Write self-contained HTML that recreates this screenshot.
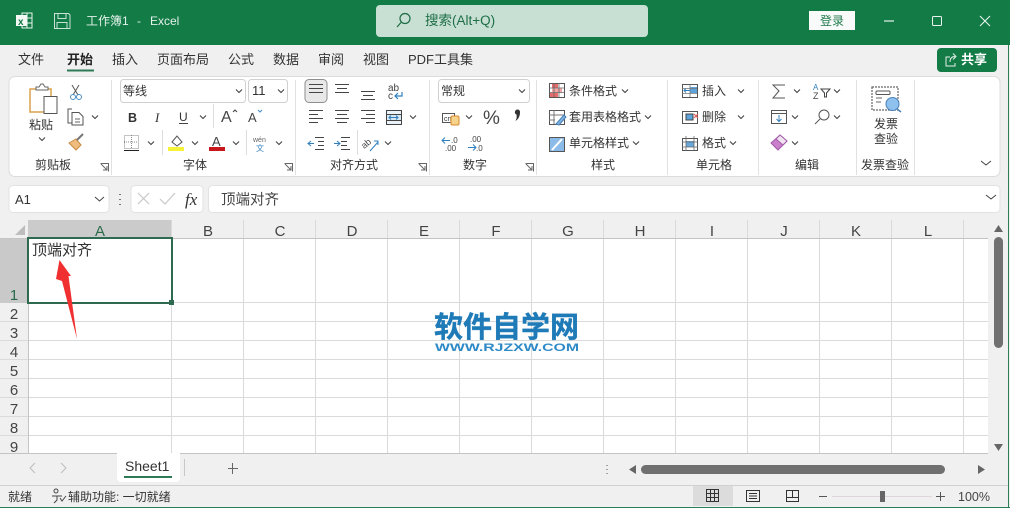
<!DOCTYPE html>
<html><head><meta charset="utf-8"><style>
html,body{margin:0;padding:0;background:#f0f0f0;width:1010px;height:508px;overflow:hidden}
svg{display:block}
text{font-family:"Liberation Sans","Noto Sans CJK SC",sans-serif;fill:#333;font-size:12px}
.t{font-size:13px;fill:#333}
.h{font-size:15px;fill:#444;text-anchor:middle}
.r{font-size:15px;fill:#444;text-anchor:middle}
.i{fill:none;stroke:#444;stroke-width:1}
.g{fill:none;stroke:#dadada;stroke-width:1}
.ch{fill:none;stroke:#444;stroke-width:1.100}
</style></head><body>
<svg width="1010" height="508" viewBox="0 0 1010 508" xmlns="http://www.w3.org/2000/svg">
<defs><polyline id="c" class="ch" points="-3,-1.500 0,1.500 3,-1.500"/></defs>
<rect width="1010" height="508" fill="#f0f0f0"/>
<!-- title bar -->
<rect width="1010" height="45" fill="#127b46"/>
<rect x="22" y="13" width="10" height="15" fill="none" stroke="#e8f3ed"/><path d="M22 18h10M22 23h10M27 13v15" stroke="#e8f3ed" fill="none"/>
<rect x="16" y="15" width="11" height="11" fill="#f4f9f6"/><text x="18" y="25" style="font-size:10px;font-weight:bold;fill:#127b46">x</text>
<path d="M54.500 13.500h14l1.500 1.500v13.500h-15.500zM58 13.500v5h8v-5M57 28.500v-6h10v6" fill="none" stroke="#c8e2d5"/>
<text x="86" y="25" style="fill:#e4f1ea;font-size:12px">工作簿1</text><text x="137" y="25" style="fill:#e4f1ea">-</text><text x="150" y="25" style="fill:#e4f1ea;font-size:12px">Excel</text>
<rect x="376" y="5" width="272" height="32" rx="4" fill="#c7e0d3"/>
<circle cx="405" cy="18.500" r="5" fill="none" stroke="#1d6b44" stroke-width="1.200"/><path d="M401 22.500l-4 4.500" stroke="#1d6b44" stroke-width="1.200"/>
<text x="425" y="25" style="font-size:13.500px;fill:#1f6e47">搜索(Alt+Q)</text>
<rect x="809" y="11" width="46" height="19" fill="#f8fbf9"/><text x="820" y="25" style="fill:#1f7a4c;font-size:12px">登录</text>
<path d="M884 21h10" stroke="#e8f3ed" stroke-width="1.200"/><rect x="932.500" y="16.500" width="9" height="9" rx="1" fill="none" stroke="#e8f3ed"/><path d="M980 16l10 10M990 16l-10 10" stroke="#e8f3ed" stroke-width="1.100"/>
<!-- menu tabs -->
<text class="t" x="18" y="64">文件</text><text class="t" x="67" y="64" style="font-weight:bold;fill:#222">开始</text>
<rect x="67" y="69.500" width="27" height="2" fill="#2e7a56"/>
<text class="t" x="112" y="64">插入</text><text class="t" x="157" y="64">页面布局</text><text class="t" x="228" y="64">公式</text><text class="t" x="273" y="64">数据</text><text class="t" x="318" y="64">审阅</text><text class="t" x="363" y="64">视图</text><text class="t" x="408" y="64">PDF工具集</text>
<rect x="937" y="48" width="60" height="24" rx="4" fill="#127b46"/>
<path d="M950 57h-4v9h9v-3M950 62c0-4 2-5.500 5-5.500M953 53.500l3 3-3 3" fill="none" stroke="#e4f1ea"/>
<text x="961" y="64" style="fill:#fff;font-size:13px;font-weight:bold">共享</text>
<!-- ribbon -->
<rect x="9" y="76.500" width="991" height="100" rx="6" fill="#fff" stroke="#dcdcdc"/>
<path d="M111.500 80v95M295.500 80v95M429.500 80v95M536.500 80v95M667.500 80v95M758.500 80v95M856.500 80v95M914.500 80v95" stroke="#e1e1e1"/>
<!-- clipboard -->
<path d="M37 89h-7v23h14" fill="none" stroke="#d9a24d" stroke-width="1.500"/><path d="M45 89h6v7" fill="none" stroke="#d9a24d" stroke-width="1.500"/>
<path d="M36 90v-3h3l2-3h2l2 3h3v3z" fill="#fff" stroke="#666"/>
<rect x="44" y="96.500" width="13" height="17" fill="#fff" stroke="#555"/>
<text x="29" y="129">粘贴</text><use href="#c" x="42" y="139"/>
<path d="M72 85l6 10M79 85l-6 10" stroke="#555" fill="none"/><circle cx="73" cy="97" r="2.500" fill="none" stroke="#4a8dc2"/><circle cx="79" cy="97" r="2.500" fill="none" stroke="#4a8dc2"/>
<path d="M72 109h-4v14h4" fill="none" stroke="#555"/><path d="M72 112.500h7l4 4v8.500h-11z" fill="#fff" stroke="#555"/><path d="M75 119h5M75 122h5" stroke="#666"/>
<use href="#c" x="95" y="117"/>
<path d="M69 143l7-4 5 6-5 5z" fill="#eebc7e" stroke="#c98a3f"/><path d="M77 140l6-6" stroke="#777" stroke-width="2"/>
<text x="35" y="169">剪贴板</text>
<path d="M100.500 163.500h8v8M101 164l6 6M107 166v4h-4" fill="none" stroke="#666"/>
<!-- font -->
<rect x="120.500" y="79.500" width="125" height="23" rx="3" fill="#fff" stroke="#d0d0d0"/><text x="123" y="95" style="font-size:12px">等线</text><use href="#c" x="239" y="91"/>
<rect x="248.500" y="79.500" width="39" height="23" rx="3" fill="#fff" stroke="#d0d0d0"/><text x="252" y="95" style="font-size:13px">11</text><use href="#c" x="281" y="91"/>
<text x="128" y="122" style="font-weight:bold;font-size:12.500px">B</text>
<text x="155" y="122" style="font-family:'Liberation Serif',serif;font-style:italic;font-size:13px">I</text>
<text x="179" y="121" style="font-size:12px">U</text><path d="M179 123.500h9" stroke="#444"/><use href="#c" x="203" y="117"/>
<path d="M213.500 104v24" stroke="#ddd"/>
<text x="221" y="122" style="font-size:16px;fill:#444">A</text><path d="M233 112l2-2 2 2" class="ch"/>
<text x="248" y="122" style="font-size:13px;fill:#444">A</text><path d="M258 110l2 2 2-2" class="ch" style="stroke:#4a8dc2"/>
<rect x="124.500" y="135.500" width="14" height="13" fill="none" stroke="#888" stroke-dasharray="1 1"/><path d="M124 150.500h15" stroke="#222"/><path d="M131.500 135v14M124 142h15" stroke="#888" stroke-dasharray="1 1"/><use href="#c" x="151" y="143"/>
<path d="M162.500 130v25M246.500 130v25" stroke="#ddd"/>
<path d="M172 142l5-6 5 6-5 4z" fill="#fff" stroke="#555"/><rect x="168" y="147" width="16" height="4" fill="#f4f336"/><use href="#c" x="195" y="143"/>
<text x="212" y="146" style="font-size:13px;fill:#444">A</text><rect x="209" y="147" width="16" height="4" fill="#c8161d"/><use href="#c" x="236" y="143"/>
<text x="253" y="142" style="font-size:7px;fill:#666">wén</text><text x="256" y="151" style="font-size:8px;fill:#3a86c2">文</text><use href="#c" x="279" y="143"/>
<text x="183" y="169">字体</text>
<path d="M284.500 163.500h8v8M285 164l6 6M291 166v4h-4" fill="none" stroke="#666"/>
<!-- alignment -->
<rect x="305" y="79.500" width="22" height="23" rx="4" fill="#e8e8e8" stroke="#8e8e8e"/>
<g stroke="#444" fill="none">
<path d="M309 84.500h14M309 88.500h14M309 92.500h14"/>
<path d="M335 84.500h14M337 88.500h10M335 92.500h14"/>
<path d="M361 91.500h14M363 95.500h10M361 99.500h14"/>
<path d="M309 110.500h14M309 114.500h9M309 118.500h14M309 122.500h9"/>
<path d="M335 110.500h14M337 114.500h10M335 118.500h14M337 122.500h10"/>
<path d="M361 110.500h14M366 114.500h9M361 118.500h14M366 122.500h9"/>
<path d="M315 137.500h9M318 141.500h6M318 145.500h6M315 149.500h9"/>
<path d="M341 137.500h9M341 141.500h6M341 145.500h6M341 149.500h9"/>
</g>
<path d="M314 143.500h-6M311 141l-3 2.500 3 2.500M334 143.500h6M337 141l3 2.500-3 2.500" fill="none" stroke="#2f7fbf"/>
<text x="388" y="91" style="font-size:10px;fill:#444">ab</text><text x="388" y="99" style="font-size:10px;fill:#444">c</text><path d="M402 92v4h-7M398 93l-3 3 3 3" fill="none" stroke="#2f7fbf" stroke-width="1.200"/>
<rect x="386.500" y="110.500" width="15" height="14" fill="#eaf3fa" stroke="#444"/><path d="M386 114.500h15M386 120.500h15" stroke="#444"/><rect x="387" y="115" width="14" height="5" fill="#d7e8f5"/><path d="M389 117.500h9M391 115.500l-2 2 2 2M396 115.500l2 2-2 2" fill="none" stroke="#2f7fbf"/>
<use href="#c" x="413" y="117"/>
<path d="M357.500 130v25" stroke="#ddd"/>
<text x="362" y="147" style="font-size:9px;fill:#444" transform="rotate(-40 366 145)">ab</text><path d="M370 151l8-9M374 141h4v4" fill="none" stroke="#2f7fbf"/><use href="#c" x="388" y="143"/>
<text x="330" y="169">对齐方式</text>
<path d="M418.500 163.500h8v8M419 164l6 6M425 166v4h-4" fill="none" stroke="#666"/>
<!-- number -->
<rect x="438.500" y="79.500" width="91" height="23" rx="3" fill="#fff" stroke="#d0d0d0"/><text x="441" y="95" style="font-size:12px">常规</text><use href="#c" x="522" y="91"/>
<rect x="442.500" y="113.500" width="12" height="9" fill="none" stroke="#555"/><text x="444" y="121" style="font-size:7px">cn</text><rect x="451" y="116" width="8" height="9" rx="1.500" fill="#f5d38c" stroke="#d98b2b"/><use href="#c" x="469" y="117"/>
<text x="483" y="124" style="font-size:19px;fill:#444">%</text>
<path d="M515 111.500a2.500 2.500 0 0 1 5 1c0 4-2 7-4.500 8.500c1-2 1.500-4 1-6.500a2.500 2.500 0 0 1-1.500-3z" fill="#333"/>
<path d="M442 140.500h8M445 137.500l-3 3 3 3" fill="none" stroke="#2f7fbf"/>
<text x="451" y="143" style="font-size:8px;fill:#444">.0</text><text x="445" y="151" style="font-size:8px;fill:#444">.00</text>
<text x="470" y="142" style="font-size:8px;fill:#444">.00</text><path d="M468 147.500h8M473 144.500l3 3-3 3" fill="none" stroke="#2f7fbf"/><text x="476" y="151" style="font-size:8px;fill:#444">.0</text>
<text x="463" y="169">数字</text>
<path d="M525.500 163.500h8v8M526 164l6 6M532 166v4h-4" fill="none" stroke="#666"/>
<!-- styles -->
<rect x="549.500" y="83.500" width="15" height="14" fill="#fff" stroke="#555"/><rect x="552" y="84" width="6" height="4" fill="#e76d6d"/><rect x="552" y="88.500" width="10" height="4" fill="#f2a5a5"/><rect x="550" y="93" width="8" height="4" fill="#e76d6d"/><path d="M554 83v14M559 83v14M549 88h15M549 92.500h15" stroke="#666" stroke-width=".8"/>
<text x="569" y="95">条件格式</text><use href="#c" x="625" y="91"/>
<rect x="549.500" y="110.500" width="15" height="14" fill="#fff" stroke="#555"/><path d="M554 110v14M549 115h15M549 120h6" stroke="#777"/><path d="M556 124l8-9 2 2-7 8z" fill="#7eb2e4" stroke="#4a80b5"/>
<text x="569" y="121">套用表格格式</text><use href="#c" x="648" y="117"/>
<rect x="549.500" y="137.500" width="15" height="14" fill="#8bbbe8" stroke="#555"/><path d="M552 150l10-11" stroke="#fff" stroke-width="2"/>
<text x="569" y="147">单元格样式</text><use href="#c" x="636" y="143"/>
<text x="591" y="169">样式</text>
<!-- cells -->
<rect x="682.500" y="84.500" width="15" height="13" fill="#fff" stroke="#555"/><rect x="690" y="87" width="7" height="6" fill="#5da4dc"/><path d="M682 88.500h15M682 93.500h15M690 84v13" stroke="#777" stroke-width=".8"/><path d="M684 90.500h6M686 88.500l-2 2 2 2" fill="none" stroke="#2f7fbf"/>
<text x="702" y="95">插入</text><use href="#c" x="741" y="91"/>
<rect x="682.500" y="111.500" width="15" height="12" fill="#fff" stroke="#555"/><rect x="686" y="114" width="7" height="6" fill="#5da4dc" stroke="#444"/><path d="M694 114l4 4M698 114l-4 4" stroke="#d9534f"/>
<text x="702" y="121">删除</text><use href="#c" x="741" y="117"/>
<rect x="682.500" y="138.500" width="15" height="12" fill="#fff" stroke="#555"/><rect x="686" y="141" width="8" height="6" fill="#6aa8da"/><path d="M682 142h15M682 147h15M686 136v15M694 136v15" stroke="#666" stroke-width=".8"/>
<text x="702" y="147">格式</text><use href="#c" x="733" y="143"/>
<text x="696" y="169">单元格</text>
<!-- editing -->
<path d="M785 85h-12l6 6-6 7h12" fill="none" stroke="#555"/><use href="#c" x="797" y="91"/>
<text x="813" y="90" style="font-size:8px;fill:#2f7fbf">A</text><text x="813" y="99" style="font-size:9px;fill:#444">Z</text><path d="M821 89h9l-3.500 4v4h-2v-4z" fill="none" stroke="#444"/><use href="#c" x="837" y="91"/>
<rect x="771.500" y="110.500" width="15" height="13" fill="#fff" stroke="#555"/><path d="M771 113.500h15" stroke="#555"/><path d="M779 115v6M776.500 119l2.500 2.500 2.500-2.500" fill="none" stroke="#2f7fbf"/><use href="#c" x="795" y="117"/>
<circle cx="824" cy="115" r="5" fill="none" stroke="#555"/><path d="M820 119l-5 5" stroke="#555"/><use href="#c" x="837" y="117"/>
<path d="M771 143l9-8 7 6-9 9z" fill="#c97fcb" stroke="#a35aa8"/><path d="M780 135l7 6-4 4-7-6z" fill="#f0e4f1" stroke="#a35aa8"/><use href="#c" x="795" y="143"/>
<text x="795" y="169">编辑</text>
<!-- invoice -->
<rect x="872" y="87" width="26" height="23" fill="#fff" stroke="#666" stroke-width="1.200" stroke-dasharray="2 1"/><rect x="876" y="91" width="14" height="3.500" rx="1" fill="#fff" stroke="#555"/><path d="M876 98h6M876 102h5" stroke="#666"/>
<circle cx="892.500" cy="104" r="6.500" fill="#8fc1ee" stroke="#4a80b5"/><path d="M897 109l4 3" stroke="#4a80b5" stroke-width="1.500"/>
<text x="874" y="128">发票</text><text x="874" y="143">查验</text><text x="861" y="169">发票查验</text>
<path d="M981 161l5 4 5-4" fill="none" stroke="#444"/>
<!-- formula bar -->
<rect x="9" y="185.500" width="100" height="27" rx="4" fill="#fff" stroke="#e2e2e2"/><text x="15" y="204" style="font-size:13px;fill:#333">A1</text><path d="M95 197l4.500 4 4.500-4" fill="none" stroke="#444"/>
<path d="M120 194v1M120 199v1M120 204v1" stroke="#777" stroke-width="2"/>
<rect x="131" y="185.500" width="72" height="27" rx="4" fill="#fff" stroke="#e2e2e2"/>
<path d="M138 193l11 11M149 193l-11 11" stroke="#c8c8c8" stroke-width="1.200"/><path d="M160 199l5 5 10-11" fill="none" stroke="#c8c8c8" stroke-width="1.200"/>
<text x="185" y="205" style="font-family:'Liberation Serif',serif;font-style:italic;font-size:17px;fill:#333">fx</text>
<rect x="208.500" y="185.500" width="791.500" height="27" rx="4" fill="#fff" stroke="#e2e2e2"/><text x="221" y="204.500" style="font-size:14.500px;fill:#444">顶端对齐</text><path d="M986 195l5 4 5-4" fill="none" stroke="#444"/>
<!-- grid -->
<rect x="28" y="238" width="960" height="215" fill="#fff"/>
<rect x="0" y="238" width="28" height="65" fill="#c9c9c9"/>
<rect x="28" y="220" width="144" height="18" fill="#cbcbcb"/>
<path d="M25 225v10h-10z" fill="#bdbdbd"/>
<path class="g" d="M171.500 220v233M243.500 220v233M315.500 220v233M387.500 220v233M459.500 220v233M531.500 220v233M603.500 220v233M675.500 220v233M747.500 220v233M819.500 220v233M891.500 220v233M963.500 220v233"/>
<path class="g" d="M0 321.500h988M0 340.500h988M0 359.500h988M0 378.500h988M0 397.500h988M0 416.500h988M0 435.500h988M28 302.500h960"/>
<path d="M0 238.500h988M28.500 238v215M0 453.500h988" stroke="#c4c4c4" fill="none"/>
<text class="h" x="100" y="236" style="fill:#2b6a4b">A</text><text class="h" x="208" y="236">B</text><text class="h" x="280" y="236">C</text><text class="h" x="352" y="236">D</text><text class="h" x="424" y="236">E</text><text class="h" x="496" y="236">F</text><text class="h" x="568" y="236">G</text><text class="h" x="640" y="236">H</text><text class="h" x="712" y="236">I</text><text class="h" x="784" y="236">J</text><text class="h" x="856" y="236">K</text><text class="h" x="928" y="236">L</text>
<text class="r" x="14" y="300" style="fill:#2b6a4b">1</text><text class="r" x="14" y="319">2</text><text class="r" x="14" y="338">3</text><text class="r" x="14" y="357">4</text><text class="r" x="14" y="376">5</text><text class="r" x="14" y="395">6</text><text class="r" x="14" y="414">7</text><text class="r" x="14" y="433">8</text><text class="r" x="14" y="452">9</text>
<text x="32" y="255" style="font-size:15px;fill:#333">顶端对齐</text>
<rect x="28" y="238" width="144" height="65" fill="none" stroke="#2d6a4f" stroke-width="2"/><rect x="169" y="300" width="5" height="5" fill="#2d6a4f"/>
<path d="M59.500 260L71 276L68.500 276L77 339L62 281L56 279Z" fill="#f03030"/>
<!-- watermark -->
<text x="434" y="337" style="font-size:29px;font-weight:bold;fill:#1f7bb8;stroke:#1f7bb8;stroke-width:.4" textLength="145" lengthAdjust="spacingAndGlyphs">软件自学网</text>
<text x="435" y="351" style="font-size:11px;font-weight:bold;fill:#2d8ac7" textLength="144" lengthAdjust="spacingAndGlyphs">WWW.RJZXW.COM</text>
<!-- scrollbars -->
<path d="M994 232l4.500-7 4.500 7z" fill="#666"/><rect x="994" y="237" width="9" height="111" rx="4.500" fill="#707070"/><path d="M994 444l4.500 7 4.500-7z" fill="#666"/>
<!-- sheet tabs -->
<path d="M35 463l-5 5 5 5M61 463l5 5-5 5" fill="none" stroke="#bcbcbc"/>
<path d="M117 453h63v25a4 4 0 0 1-4 4h-55a4 4 0 0 1-4-4z" fill="#fff"/><text x="125" y="471" style="font-size:14px;fill:#333">Sheet1</text><rect x="124" y="476" width="48" height="2" fill="#2e7a56"/>
<path d="M184.500 459v17" stroke="#c8c8c8"/><path d="M228 468.500h10M232.500 463v11" stroke="#666"/>
<path d="M607 465v1M607 469v1M607 473v1" stroke="#888" stroke-width="1.500"/>
<path d="M636 465l-7 4.500 7 4.500z" fill="#666"/><rect x="641" y="465" width="304" height="9" rx="4.500" fill="#707070"/><path d="M978 465l7 4.500-7 4.500z" fill="#666"/>
<!-- status bar -->
<path d="M0 485.500h1008" stroke="#d0d0d0"/>
<text x="8" y="501" style="font-size:12px">就绪</text>
<path d="M54 491a2 2 0 1 0 4 0 2 2 0 1 0-4 0M52 496h10M57 496v4l-3 3M60 498l2 3 4-5" fill="none" stroke="#444"/>
<text x="68" y="501" style="font-size:12px">辅助功能: 一切就绪</text>
<rect x="693" y="486" width="40" height="20" fill="#dcdcdc"/>
<path d="M706.500 489.500h12v12h-12zM710.500 489v13M714.500 489v13M706 493.500h13M706 497.500h13" fill="none" stroke="#333"/>
<path d="M746.500 490.500h13v11h-13zM749 493.500h8M749 496h8M749 498.500h8" fill="none" stroke="#333"/>
<path d="M786.500 490.500h12v11h-12zM786 497.500h13M792.500 490v7" fill="none" stroke="#333"/>
<path d="M819 496.500h8" stroke="#555"/><path d="M832 496.500h100" stroke="#e0d5dc"/><rect x="880" y="491" width="5" height="11" fill="#666"/><path d="M936 496.500h9M940.500 492v9" stroke="#555"/>
<text x="958" y="501" style="font-size:12.500px;fill:#444">100%</text>
<!-- window border -->
<path d="M0 507.500h1010M1008.500 45v463" stroke="#2a7f56" fill="none"/>
</svg>
</body></html>
